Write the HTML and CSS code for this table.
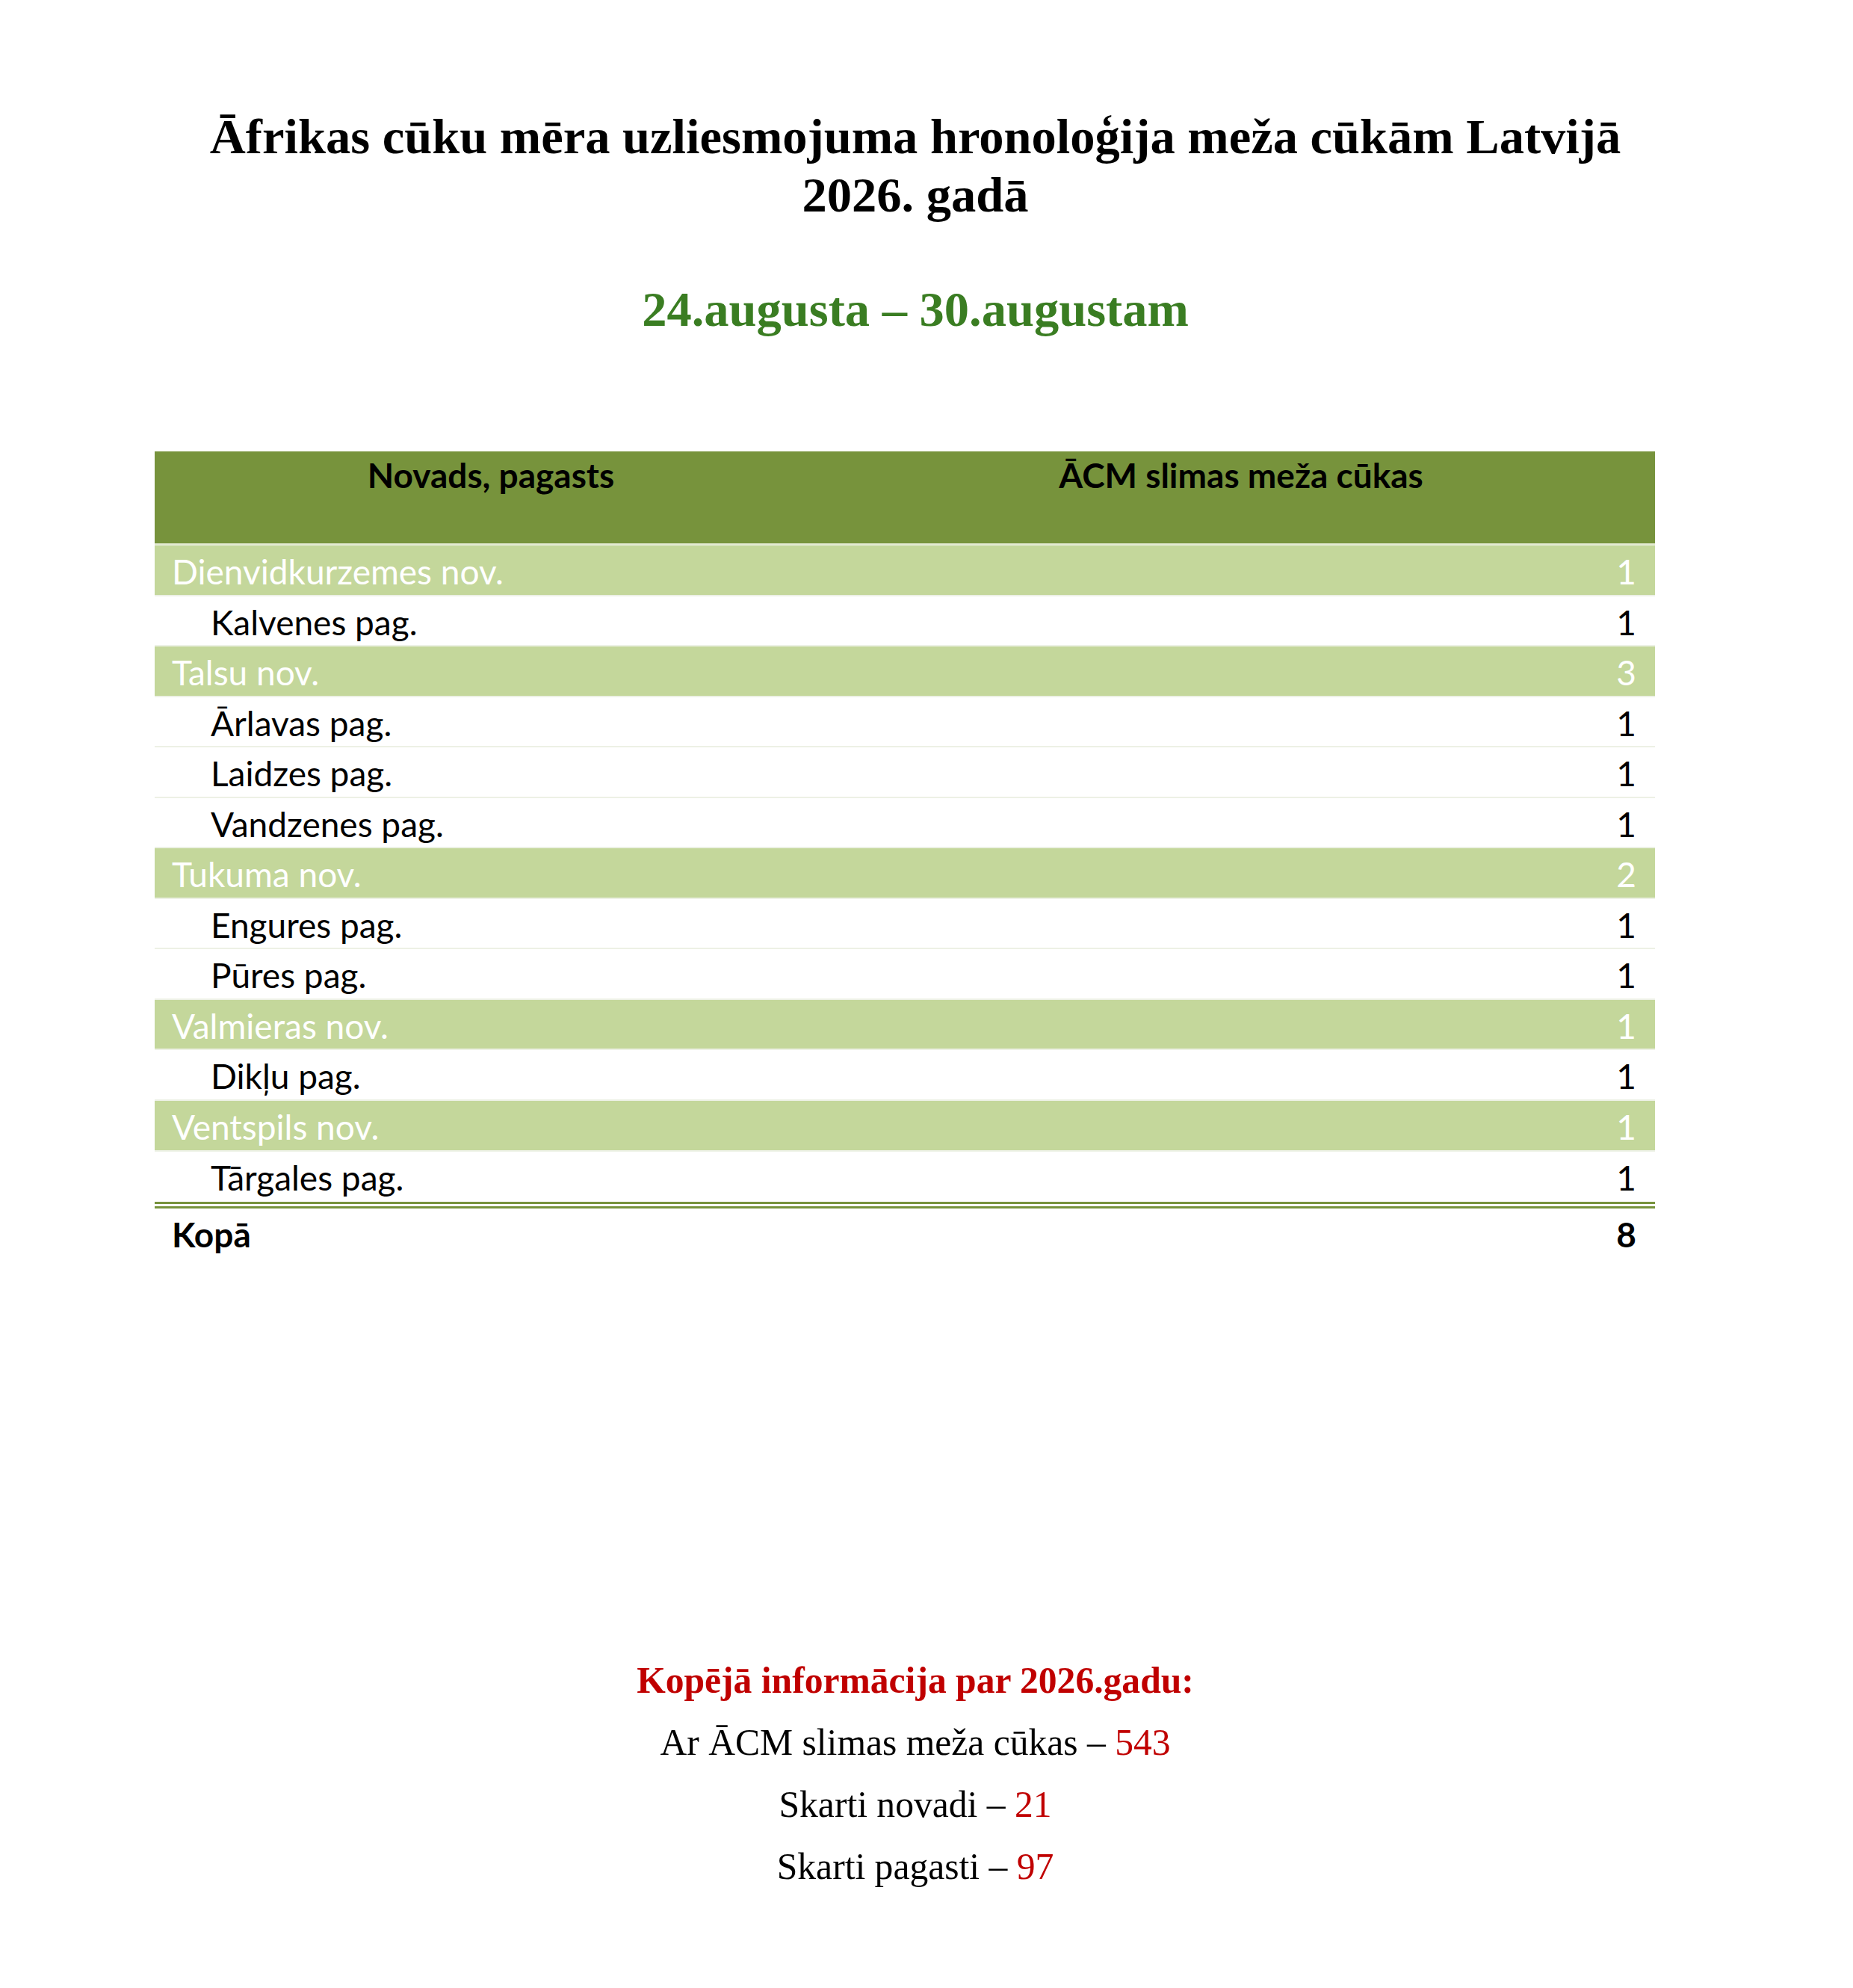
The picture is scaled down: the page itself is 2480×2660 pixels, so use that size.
FILE: index.html
```html
<!DOCTYPE html>
<html lang="lv">
<head>
<meta charset="utf-8">
<title>ĀCM hronoloģija</title>
<link rel="stylesheet" href="styles.css">
</head>
<body>
<div class="page">
  <h1 class="title">Āfrikas cūku mēra uzliesmojuma hronoloģija meža cūkām Latvijā<br>2026. gadā</h1>
  <h2 class="subtitle">24.augusta – 30.augustam</h2>

  <div class="table">
    <div class="thead">
      <div class="c1">Novads, pagasts</div>
      <div class="c2">ĀCM slimas meža cūkas</div>
    </div>
    <div class="row nov"><div class="c1">Dienvidkurzemes nov.</div><div class="c2">1</div></div>
    <div class="row pag"><div class="c1">Kalvenes pag.</div><div class="c2">1</div></div>
    <div class="row nov"><div class="c1">Talsu nov.</div><div class="c2">3</div></div>
    <div class="row pag"><div class="c1">Ārlavas pag.</div><div class="c2">1</div></div>
    <div class="row pag"><div class="c1">Laidzes pag.</div><div class="c2">1</div></div>
    <div class="row pag"><div class="c1">Vandzenes pag.</div><div class="c2">1</div></div>
    <div class="row nov"><div class="c1">Tukuma nov.</div><div class="c2">2</div></div>
    <div class="row pag"><div class="c1">Engures pag.</div><div class="c2">1</div></div>
    <div class="row pag"><div class="c1">Pūres pag.</div><div class="c2">1</div></div>
    <div class="row nov"><div class="c1">Valmieras nov.</div><div class="c2">1</div></div>
    <div class="row pag"><div class="c1">Dikļu pag.</div><div class="c2">1</div></div>
    <div class="row nov"><div class="c1">Ventspils nov.</div><div class="c2">1</div></div>
    <div class="row pag last"><div class="c1">Tārgales pag.</div><div class="c2">1</div></div>
    <div class="row total"><div class="c1">Kopā</div><div class="c2">8</div></div>
  </div>

  <div class="summary">
    <p class="sum-title">Kopējā informācija par 2026.gadu:</p>
    <p class="sum-line">Ar ĀCM slimas meža cūkas – <span class="red">543</span></p>
    <p class="sum-line">Skarti novadi – <span class="red">21</span></p>
    <p class="sum-line">Skarti pagasti – <span class="red">97</span></p>
  </div>
</div>
</body>
</html>
```
FILE: styles.css
```css
html, body {
  margin: 0;
  padding: 0;
  background: #ffffff;
}

body {
  width: 2480px;
}

.page {
  margin-left: 207px;
  width: 2036px;
  padding-top: 143.5px;
}

.title {
  margin: 0;
  font-family: "Liberation Serif", "Times New Roman", serif;
  font-weight: bold;
  font-size: 66.5px;
  line-height: 78px;
  text-align: center;
  color: #000000;
}

.subtitle {
  margin: 75px 0 0 0;
  font-family: "Liberation Serif", "Times New Roman", serif;
  font-weight: bold;
  font-size: 66.5px;
  line-height: 78px;
  text-align: center;
  color: #3a7d22;
}

.table {
  margin-top: 151.5px;
  width: 2008px;
  font-family: Lato, "Open Sans", sans-serif;
  font-size: 46px;
  color: #000000;
}

.thead {
  display: flex;
  height: 126px;
  box-sizing: border-box;
  background: #77933c;
  border-bottom: 3px solid #e3ead2;
  font-weight: bold;
  line-height: 64.5px;
}

.row {
  display: flex;
  height: 67.55px;
  box-sizing: border-box;
  border-bottom: 2px solid #edf1e5;
  padding-top: 4px;
  line-height: 62.4px;
}

.c1 {
  width: 900px;
  flex: none;
  box-sizing: border-box;
  padding-left: 23px;
}

.c2 {
  flex: 1;
  text-align: right;
  padding-right: 25px;
}

.thead .c1,
.thead .c2 {
  padding-left: 0;
  padding-right: 0;
  text-align: center;
}

.nov {
  background: #c4d79b;
  color: #ffffff;
}

.pag .c1 {
  padding-left: 75px;
}

.row.last {
  border-bottom: 9px double #77933c;
  height: 76.55px;
}

.total {
  border-bottom: none;
  font-weight: bold;
}

.summary {
  margin-top: 522px;
  font-family: "Liberation Serif", "Times New Roman", serif;
  font-size: 49.6px;
  text-align: center;
  color: #000000;
}

.summary p {
  margin: 0;
  line-height: 83px;
}

.sum-title {
  font-weight: bold;
  color: #c00000;
}

.red {
  color: #c00000;
}
```
